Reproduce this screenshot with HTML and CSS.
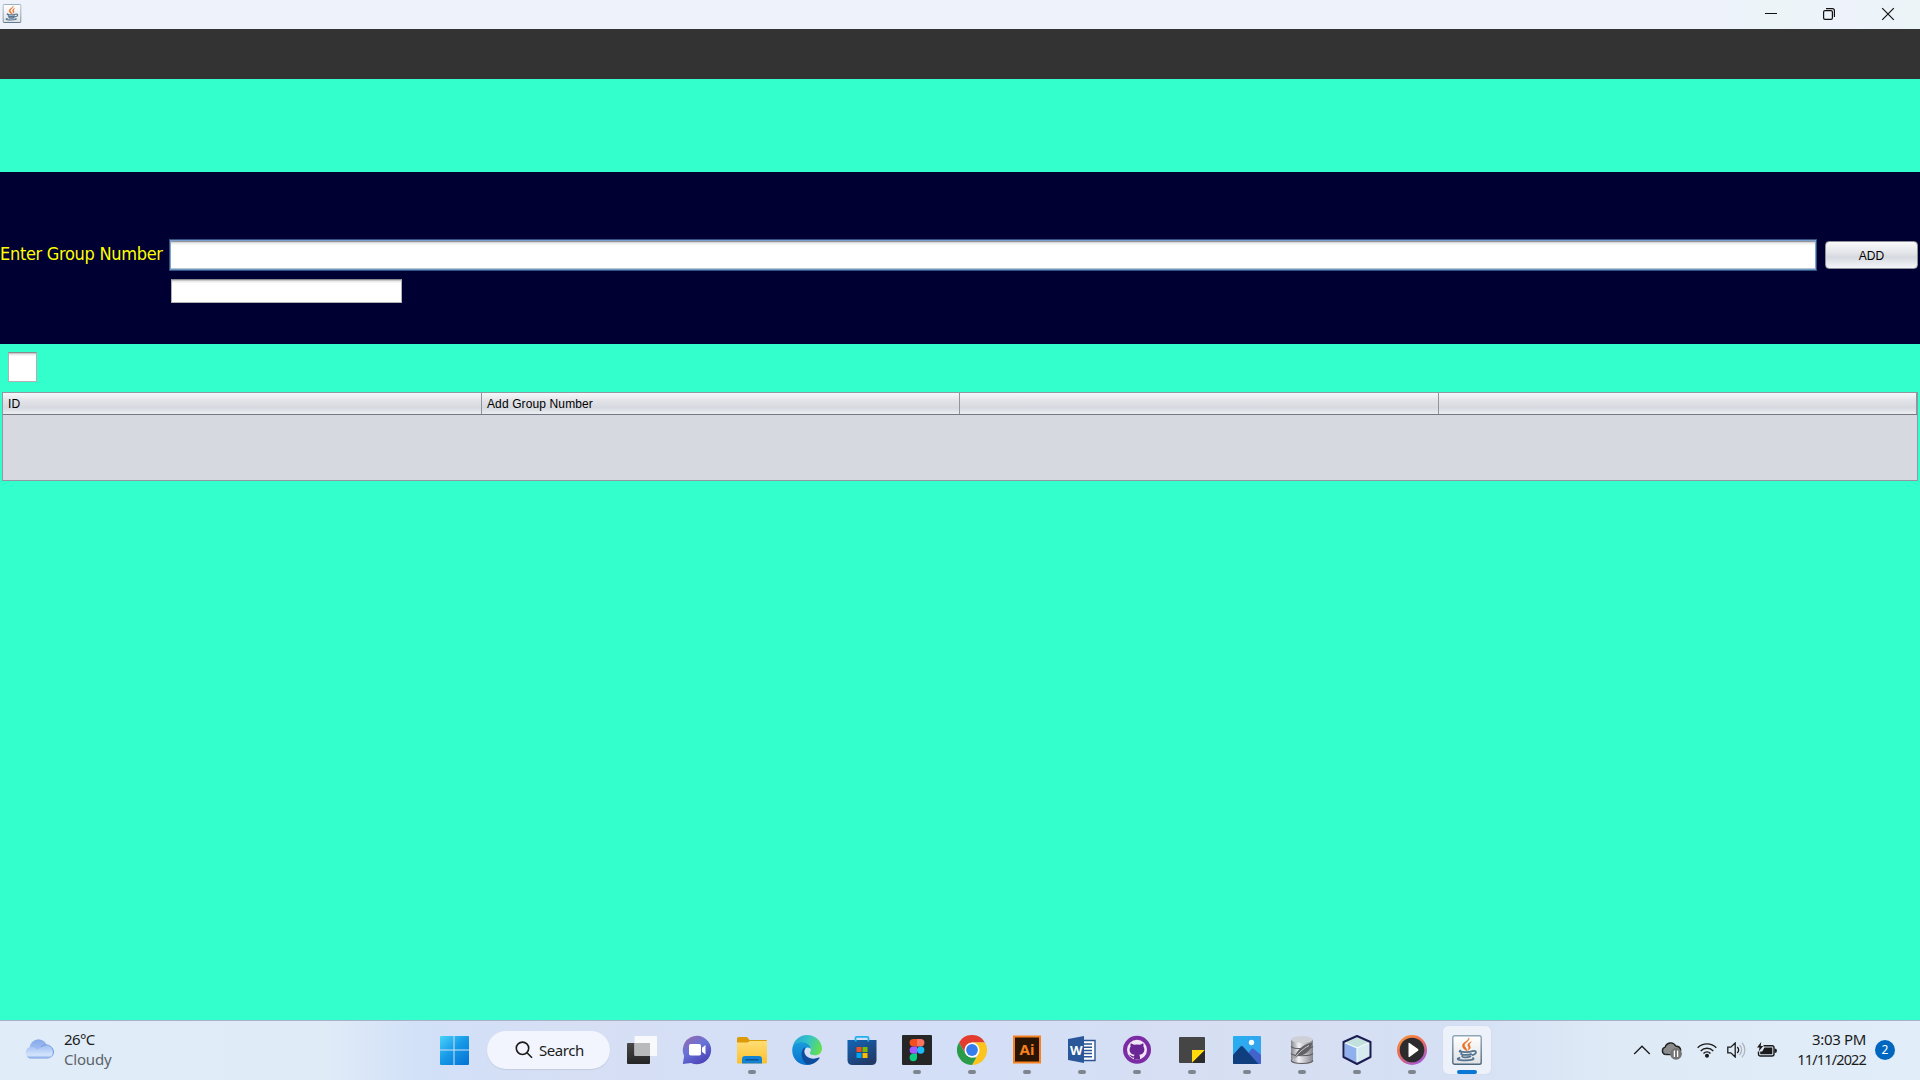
FILE: index.html
```
<!DOCTYPE html>
<html lang="en">
<head>
<meta charset="utf-8">
<title>Add Group Number</title>
<link rel="stylesheet" href="styles.css">
</head>
<body>
<svg width="0" height="0" class="defs">
  <defs>
    <linearGradient id="javaTile" x1="0" y1="0" x2="0" y2="1"><stop offset="0" stop-color="#fff"/><stop offset="1" stop-color="#dfe1e4"/></linearGradient>
    <linearGradient id="javaEdge" x1="0" y1="0" x2="0" y2="1"><stop offset="0" stop-color="#8ea6b8"/><stop offset="1" stop-color="#4b6880"/></linearGradient>
    <symbol id="java" viewBox="0 0 30 30">
      <rect x=".8" y=".8" width="28.4" height="28.4" rx="1.8" fill="url(#javaTile)" stroke="url(#javaEdge)" stroke-width="1.4"/>
      <path d="M16.800 2.800c1.600 3.400-5.400 5-4.200 8.200.5 1.400 2.200 2.600 2.600 5-2.800-1.400-5.400-3.400-4.600-6.200.6-2.600 6.200-3.800 6.200-7zM19.500 6.800c-2.800 1-4 2.200-3.600 3.800.3 1.200 1.600 2 .2 4.700 2.700-1.700 2.500-3.300 1.700-4.600-.7-1.200-.3-2.600 1.700-3.900z" fill="#ea7022" stroke="#ea7022" stroke-width=".5"/>
      <g fill="none" stroke="#557491" stroke-width="1.800" stroke-linecap="round">
        <path d="M8.500 15.600c-2 .9-1 1.500 5 1.500 3.200 0 5.500-.3 7-.9M9.200 18.300c-.5 1.500 2 1.600 4.500 1.600s4.200-.3 5.500-.8M10.200 21.200c-.4 1.400 5 1.600 8.200.3M21 16.200c3.800-1.200 4.200 2.600-.6 3.900M7.500 23c-3.500.8-2 2.300 6 2.300 6.500 0 9.500-1.100 7.500-2.300"/>
      </g>
    </symbol>
  </defs>
</svg>

<header class="titlebar">
  <svg class="app-icon" viewBox="0 0 30 30"><use href="#java"/></svg>
  <div class="controls">
    <svg viewBox="0 0 14 14"><path d="M1 6.500h12" stroke="#111" /></svg>
    <svg viewBox="0 0 14 14" fill="none" stroke="#111" stroke-width="1.200"><rect x="1.600" y="3.600" width="8.800" height="8.800" rx="1.400"/><path d="M4 1.600h6.400q2 0 2 2V10"/></svg>
    <svg viewBox="0 0 14 14"><path d="M1.200 1.200l11.600 11.600M12.800 1.200L1.200 12.800" stroke="#111" stroke-width="1.200"/></svg>
  </div>
</header>
<div class="band"></div>

<main class="content">
  <form class="entry">
    <label class="caption" for="group">Enter Group Number</label>
    <input class="field focused" id="group" type="text">
    <button class="add" type="button">ADD</button>
    <input class="field second" type="text">
  </form>
  <div class="field box"></div>
  <section class="table">
    <div class="head">
      <div>ID</div><div>Add Group Number</div><div></div><div></div>
    </div>
  </section>
</main>

<footer class="taskbar">
  <div class="weather">
    <svg width="30" height="20" viewBox="0 0 30 20">
      <defs><linearGradient id="cl" x1="0" y1="0" x2="0" y2="1"><stop offset="0" stop-color="#86a9ea"/><stop offset="1" stop-color="#b5cdf7"/></linearGradient>
      <linearGradient id="cl2" x1="0" y1="0" x2="0" y2="1"><stop offset="0" stop-color="#a2bff3"/><stop offset=".75" stop-color="#d5e4fb"/><stop offset="1" stop-color="#799ee5"/></linearGradient></defs>
      <circle cx="14.500" cy="9" r="8.700" fill="url(#cl)"/>
      <path d="M6 19.500a6 6 0 0 1 0-11.500c3-.5 5 .5 6.500 2.500L16 9.500C20 4.500 30 6.500 30 13a6.500 6.500 0 0 1-6.500 6.500z" fill="url(#cl2)"/>
      <path d="M17 8c3-4 12-2.500 12.500 5 0 2-1 3.500-2 4.500" fill="none" stroke="#7499e2" stroke-width="1"/>
    </svg>
    <div class="wtext"><span class="temp">26°C</span><span class="sky">Cloudy</span></div>
  </div>

  <nav class="apps">
    <div class="app">
      <svg viewBox="0 0 30 30"><defs><linearGradient id="win" gradientUnits="userSpaceOnUse" x1="1" y1="1" x2="26" y2="29"><stop offset="0" stop-color="#4ad2fb"/><stop offset=".5" stop-color="#179be8"/><stop offset="1" stop-color="#0677d6"/></linearGradient></defs>
      <path fill="url(#win)" d="M1 2q0-1 1-1h12.500v13.500H1zM15.500 1H29q1 0 1 1v12.500H15.500zM1 15.500h13.500V30H2q-1 0-1-1zM15.500 15.500H30V29q0 1-1 1H15.500z"/></svg>
    </div>
    <div class="search">
      <svg width="18" height="18" viewBox="0 0 18 18" fill="none" stroke="#1b1b1b" stroke-width="1.600"><circle cx="7.500" cy="7.300" r="6.200"/><path d="M12 11.800l5 5"/></svg>
      <span>Search</span>
    </div>
    <div class="app">
      <svg viewBox="0 0 30 30"><defs><linearGradient id="tv" x1="0" y1="0" x2="0" y2="1"><stop offset="0" stop-color="#484848"/><stop offset="1" stop-color="#252525"/></linearGradient></defs>
      <rect x="0" y="8" width="23" height="21" rx="1" fill="url(#tv)"/><rect x="7.500" y="1" width="22.500" height="20" rx="1" fill="#fafafa" opacity=".95"/><path d="M7.500 8H23v13H8.500q-1 0-1-1z" fill="#b9babb"/></svg>
    </div>
    <div class="app">
      <svg viewBox="0 0 30 30"><defs><linearGradient id="chat" x1="0" y1="0" x2=".6" y2="1"><stop offset="0" stop-color="#9b66a9"/><stop offset=".5" stop-color="#6874d8"/><stop offset="1" stop-color="#4d45b8"/></linearGradient></defs>
      <path d="M15 .8a14.200 14.200 0 1 1-6 27.100L.8 29l1.300-8A14.200 14.200 0 0 1 15 .8z" fill="url(#chat)"/><rect x="7" y="9" width="12" height="11.500" rx="1.700" fill="#fff"/><path d="M20 12.700l3.500-2.700v9.500L20 16.800z" fill="#fff"/></svg>
    </div>
    <div class="app run">
      <svg viewBox="0 0 30 30"><defs><linearGradient id="fo" x1="0" y1="0" x2="0" y2="1"><stop offset="0" stop-color="#ffdd74"/><stop offset="1" stop-color="#fcc02d"/></linearGradient></defs>
      <path d="M0 3.500Q0 2 1.500 2H10l2.500 3H29q1 0 1 1v3H0z" fill="#dc9a09"/><path d="M0 7.500h10.500L13 6h17v21.500q0 1-1 1H1q-1 0-1-1z" fill="url(#fo)"/>
      <path d="M5 28.500V24q0-3 3-3h14q3 0 3 3v4.500z" fill="#1583d4"/><path d="M9 24.800h12" stroke="#0b5392" stroke-width="1.400" stroke-linecap="round"/></svg>
    </div>
    <div class="app">
      <svg viewBox="0 0 30 30"><defs><linearGradient id="eg" x1="0" y1=".3" x2="1" y2=".6"><stop offset="0" stop-color="#23a4dd"/><stop offset=".5" stop-color="#36c5c3"/><stop offset="1" stop-color="#66e04c"/></linearGradient><linearGradient id="eb" x1="0" y1="0" x2="0" y2="1"><stop offset="0" stop-color="#1b9bdd"/><stop offset="1" stop-color="#0871cf"/></linearGradient></defs>
      <path d="M.4 13C1.500 5.500 7.500 0 15 0c9 0 15 6.500 15 13.500 0 4-3 6.800-7 6.800-3.500 0-5.500-1.200-5.200-2.500 2.500-2.800.5-7-4-7.800C8 9 3 10.500.4 13z" fill="url(#eg)"/>
      <path d="M.2 15C.5 9.500 5.500 7.300 9.500 7.300c5.500 0 9 3.200 9 6.500-3.300-3-7 0-6.500 4.200.5 6 7 9.500 12 8C21 29 17.500 30 15 30 7 30 0 24 .2 15z" fill="url(#eb)"/>
      <path d="M13.500 12C8 14.500 8 24.500 15 29.500c5.500.5 10-2.300 12.500-6.200.4-.8-.2-1-.8-.8-7 3.300-15.500-1-14.200-7.500z" fill="#104c9c"/></svg>
    </div>
    <div class="app">
      <svg viewBox="0 0 30 30"><defs><linearGradient id="st" x1="0" y1="0" x2=".6" y2="1"><stop offset="0" stop-color="#1265b6"/><stop offset="1" stop-color="#223a68"/></linearGradient></defs>
      <path d="M8.500 6.500V3q0-1.200 1.200-1.200h10.600q1.200 0 1.200 1.200v3.500" fill="none" stroke="#25b0ec" stroke-width="1.800"/><path d="M.5 5h29v20q0 5-5 5h-19q-5 0-5-5z" fill="url(#st)"/>
      <path d="M8.700 6.500V5M21.300 6.500V5" stroke="#25b0ec" stroke-width="1.800"/><path fill="#f25022" d="M9.500 12h5v5h-5z"/><path fill="#7fba00" d="M15.500 12h5v5h-5z"/><path fill="#00a4ef" d="M9.500 18h5v5h-5z"/><path fill="#ffb900" d="M15.500 18h5v5h-5z"/></svg>
    </div>
    <div class="app run">
      <svg viewBox="0 0 30 30"><rect width="30" height="30" rx="1" fill="#262626"/><path d="M15 4h-3.700a3.700 3.700 0 0 0 0 7.400H15z" fill="#f24e1e"/><path d="M15 4h3.700a3.700 3.700 0 0 1 0 7.400H15z" fill="#ff7262"/><path d="M15 11.400h-3.700a3.700 3.700 0 0 0 0 7.400H15z" fill="#a259ff"/><circle cx="18.700" cy="15.100" r="3.700" fill="#1abcfe"/><path d="M15 18.800h-3.700a3.700 3.700 0 1 0 3.700 3.700z" fill="#0acf83"/></svg>
    </div>
    <div class="app run">
      <svg viewBox="0 0 30 30"><path d="M2 7.500A15 15 0 0 1 28 7.500H15L8.500 18.800z" fill="#e33b2e"/><path d="M28 7.500A15 15 0 0 1 15 30L21.500 18.800 15 7.500z" fill="#fdc41c"/><path d="M15 30A15 15 0 0 1 2 7.500L8.500 18.800Q11 22.500 15 22.500h4.400z" fill="#2a9b49"/><circle cx="15" cy="15" r="7.500" fill="#fff"/><circle cx="15" cy="15" r="5.900" fill="#357ded"/></svg>
    </div>
    <div class="app run">
      <svg viewBox="0 0 30 30"><rect x="2" y="1.500" width="26" height="26" fill="#2a1503" stroke="#f5811f" stroke-width="2"/><text x="15" y="19.800" text-anchor="middle" class="ai">Ai</text></svg>
    </div>
    <div class="app run">
      <svg viewBox="0 0 30 30"><path d="M15 5.500h13v20H15z" fill="#fff" stroke="#295596" stroke-width="1.400"/><path d="M16 9h9M16 12.200h9M16 15.400h9M16 18.600h9M16 21.800h9" stroke="#295596" stroke-width="1.500"/><path d="M1 4l16-3v27L1 25z" fill="#2a579a"/><text x="9.200" y="19.700" text-anchor="middle" class="word">W</text></svg>
    </div>
    <div class="app run">
      <svg viewBox="0 0 30 30"><circle cx="15" cy="14.800" r="14" fill="#7b2ba3"/><circle cx="15" cy="14.800" r="10" fill="#f0e6f6"/><path d="M8.800 8.200l3.200 1.600q3-.8 6 0l3.200-1.600q.6 1.800.2 3.200c2.400 3.800.2 8-4.200 8.400.8.800.8 1.600.8 4.800h-6v-2c-3 .6-3.200-1.700-5-2.800 2.400-.4 2.500 2.200 5 1.400q.1-1 .7-1.400c-4.400-.4-6.500-4.600-4.100-8.400q-.4-1.400.2-3.200z" fill="#6a2694"/></svg>
    </div>
    <div class="app run">
      <svg viewBox="0 0 30 30"><rect x="2" y="2" width="26" height="26" rx="1" fill="#454545"/><path d="M15 15h13L15 28z" fill="#ffdb0e"/><path d="M28 15v12q0 1-1 1H15z" fill="#2b2b2b"/></svg>
    </div>
    <div class="app run">
      <svg viewBox="0 0 30 30"><defs><linearGradient id="ph" x1="0" y1="0" x2="1" y2="1"><stop offset="0" stop-color="#27aef0"/><stop offset="1" stop-color="#3aa0ee"/></linearGradient></defs><rect x="1" y="1" width="28" height="28" rx="1" fill="url(#ph)"/><path d="M14 21l5.500-7q1.200-1 2.400 0L29 20v8q0 1-1 1H14z" fill="#4263cc"/><path d="M1 20l7.500-8.500q1.200-1 2.400 0L26.500 29H2q-1 0-1-1z" fill="#103f7f"/><circle cx="19.500" cy="7.500" r="2.700" fill="#f5fbff"/></svg>
    </div>
    <div class="app run">
      <svg viewBox="0 0 30 30"><defs><linearGradient id="db" x1="0" y1="0" x2="1" y2="0"><stop offset="0" stop-color="#85858b"/><stop offset=".35" stop-color="#f1f1f6"/><stop offset="1" stop-color="#85858c"/></linearGradient></defs>
      <path d="M4 4.500v21c0 4.500 22 4.500 22 0v-21z" fill="url(#db)"/><ellipse cx="15" cy="4.500" rx="11" ry="3.500" fill="#cfcfd7"/><path d="M4 11.500c2 3 20 3 22 0M4 18.500c2 3 20 3 22 0M4 25.500c2 4 20 4 22 0" fill="none" stroke="#5c5c60" stroke-width="1.200"/><path d="M7 24C9 16 15 9.500 25 7.500 25 14 20 20 11 21z" fill="#626266"/><path d="M5.500 26C11 18 15 14.500 22 10.500" stroke="#c9c9ce" fill="none"/></svg>
    </div>
    <div class="app run">
      <svg viewBox="0 0 30 30"><path d="M15 2.500L27 7.500 15 13 3 7.500z" fill="#c3e1dc"/><path d="M15 13l12.300-5.300v13.800L15 27.800z" fill="#d5ebef"/><path d="M15 13L2.700 7.700v13.800L15 27.800z" fill="#8fb0ec"/><path d="M3 7.700L15 13v14M15 13l12-5.300" stroke="#eefafa" stroke-width="1.200" fill="none"/><path d="M15 1l13.500 6v15L15 29 1.500 22V7z" fill="none" stroke="#1c1c52" stroke-width="2" stroke-linejoin="round"/></svg>
    </div>
    <div class="app run">
      <svg viewBox="0 0 30 30"><defs><linearGradient id="mp" x1="0" y1="0" x2=".6" y2="1"><stop offset="0" stop-color="#fb9c33"/><stop offset=".5" stop-color="#ee6a55"/><stop offset="1" stop-color="#a95ad0"/></linearGradient></defs><circle cx="15" cy="15" r="15" fill="url(#mp)"/><circle cx="15" cy="15" r="12.300" fill="#2c2c2e"/><path d="M11.500 8.500q0-1 1-.5L21 14q1 .9 0 1.800L12.500 22q-1 .4-1-.6z" fill="#fff"/></svg>
    </div>
    <div class="app run active">
      <svg viewBox="0 0 30 30"><use href="#java"/></svg>
    </div>
  </nav>

  <div class="tray">
    <svg class="chev" width="18" height="10" viewBox="0 0 18 10"><path d="M1.200 9L9 1.200 16.800 9" fill="none" stroke="#1b1b1b" stroke-width="1.300"/></svg>
    <svg class="cloud" width="21" height="19" viewBox="0 0 21 19"><path d="M4.500 13.500a3.800 3.800 0 0 1-.3-7.400C5.500 1.500 12 0 14.700 5c3 .2 5 2 5 5" fill="#8b8b8b" stroke="#1f1f1f" stroke-width="1.400"/><path d="M4.500 13.500H10" stroke="#1f1f1f" stroke-width="1.400"/><circle cx="15" cy="12.800" r="5.900" fill="#747474"/><path d="M13.400 9.500v6.500M16.600 9.500v6.500" stroke="#fff" stroke-width="1.300"/></svg>
    <svg class="wifi" width="20" height="16" viewBox="0 0 20 16" fill="none" stroke="#1b1b1b" stroke-width="1.400"><path d="M.7 5.800a13 13 0 0 1 18.600 0M3.700 8.900a8.900 8.900 0 0 1 12.600 0M6.500 11.500a5 5 0 0 1 7 0"/><circle cx="10" cy="13.700" r="1.300" fill="#1b1b1b"/></svg>
    <svg class="vol" width="20" height="16" viewBox="0 0 20 16" fill="none" stroke="#1b1b1b" stroke-width="1.300"><path d="M.8 5.200h3L8.200 1v14l-4.400-4.200h-3zM10.300 5a4.500 4.500 0 0 1 0 6"/><path d="M12.500 3a7 7 0 0 1 0 10M15 .8a10.500 10.500 0 0 1 0 14.400" stroke="#aeb5bd"/></svg>
    <svg class="batt" width="20" height="16" viewBox="0 0 20 16"><path d="M6.500 3.700H15q2 0 2 2V12q0 2-2 2H3.500q-2 0-2-2V9.500" fill="none" stroke="#1b1b1b" stroke-width="1.400"/><path d="M7.500 5.500h7.800v6.800H3.200V9.500h2z" fill="#1b1b1b"/><path d="M17.500 6.500q2.500 0 2.500 2.300t-2.500 2.300z" fill="#1b1b1b"/><path d="M4.200 0L0 5.500h2.500L1.800 9.500 6.200 4H3.700z" fill="#1b1b1b"/></svg>
    <div class="clock"><span class="time">3:03 PM</span><span class="date">11/11/2022</span></div>
    <div class="badge">2</div>
  </div>
</footer>
</body>
</html>
```
FILE: styles.css
```
* { box-sizing: border-box; }
body {
  margin: 0;
  width: 1920px;
  height: 1080px;
  overflow: hidden;
  display: flex;
  flex-direction: column;
  background: #33ffcc;
  font-family: "Liberation Sans", sans-serif;
}
.defs { position: absolute; }
svg { display: block; flex: none; }

.titlebar {
  height: 29px;
  flex: none;
  display: flex;
  align-items: flex-start;
  justify-content: space-between;
  background: linear-gradient(90deg, #eef3fb 0 90%, #ebf4f7 92%, #eef3fb 96%, #ebf4f7);
  padding: 4px 25px 0 2px;
}
.app-icon { width: 20px; height: 19px; }
.controls { display: flex; gap: 44px; padding-top: 3px; }
.controls svg { width: 14px; height: 14px; }
.controls svg:last-child { margin-left: 1px; }

.band { height: 50px; flex: none; background: #333; }

.content {
  flex: 1;
  padding-top: 93px;
  display: flex;
  flex-direction: column;
}
.entry {
  flex: none;
  height: 172px;
  background: #000033;
  padding: 67px 2px 0 0;
  display: grid;
  grid-template-columns: 169px 1648px 93px;
  grid-template-rows: 32px 24px;
  row-gap: 8px;
  justify-content: start;
}
.caption {
  color: #ffff00;
  font: 18px/30px "DejaVu Sans Condensed", "DejaVu Sans", sans-serif;
  font-stretch: condensed;
  white-space: nowrap;
  letter-spacing: -0.3px;
}
.field {
  margin: 0;
  padding: 0;
  border: 1px solid #b0b0b5;
  border-top-color: #8b8b90;
  background: linear-gradient(#c8c8ca 0 1px, #eaeaeb 1px 2px, #fff 3px);
  outline: none;
}
.focused {
  margin: 1px;
  border-color: #7ba0d2 #7ba6d3 #6a9bc8 #7ba6d3;
  background: linear-gradient(#949496 0 1px, #dadadc 1px 2px, #eee 2px 3px, #fff 4px);
  box-shadow: 0 0 0 1px #34507f, inset 0 -1px #bcc4cc;
}
.add {
  margin: 2px 0 2px 8px;
  width: 93px;
  height: 28px;
  padding: 1px 0 0;
  border: 1px solid #8d9097;
  border-radius: 4px;
  background: linear-gradient(#fafafb, #e4e6ea 40%, #d6d9df 58%, #f4f6fb);
  font: 12px "Liberation Sans", sans-serif;
  color: #000;
}
.second { grid-column: 2; width: 231px; margin-left: 2px; }
.box { flex: none; width: 29px; height: 30px; margin: 8px 0 10px 8px; }

.table {
  flex: none;
  height: 89px;
  margin: 0 2px;
  background: #d6d9e0;
  border: 1px solid #9297a1;
}
.head {
  height: 22px;
  display: grid;
  grid-template-columns: 479px 478px 479px 1fr;
  grid-template-rows: 21px;
  border-bottom: 1px solid #737882;
  background: linear-gradient(#f7f8fa, #e2e4e9 35%, #d6d9df 70%, #eceef3);
  font-size: 12px;
  line-height: 23px;
  letter-spacing: 0.12px;
}
.head div { padding-left: 5px; border-right: 1px solid #8f949d; white-space: nowrap; }

.taskbar {
  flex: none;
  height: 60px;
  border-top: 1px solid #a9b1c9;
  display: flex;
  font-family: "Noto Sans", "Open Sans", sans-serif;
  font-size: 15px;
  color: #1b1b1b;
  background: linear-gradient(90deg, #e0ecf7 0, #dfebf7 17%, #d2e0f8 22%, #d6dff4 30%, #d3dff7 50%, #d7dff2 65%, #d5e0f4 76%, #deeaf6 84%, #e1edf8 100%);
}
.weather { width: 426px; flex: none; display: flex; padding: 8px 0 0 25px; gap: 9px; }
.weather svg { margin: 10px 1px 0 -1px; }
.wtext, .clock { display: flex; flex-direction: column; line-height: 20px; }
.temp { letter-spacing: -0.6px; }
.sky { color: #5c636b; letter-spacing: -0.2px; }

.apps { display: flex; flex: none; }
.app {
  position: relative;
  width: 55px;
  height: 59px;
  padding: 14px 12px 0 13px;
}
.app svg { width: 30px; height: 30px; position: relative; }
.run::after {
  content: "";
  position: absolute;
  left: 24px;
  top: 49px;
  width: 8px;
  height: 4px;
  border-radius: 2px;
  background: #7f858f;
}
.active::before {
  content: "";
  position: absolute;
  left: 4px;
  top: 5px;
  width: 48px;
  height: 48px;
  border-radius: 5px;
  background: #edf1fa;
  box-shadow: 0 0 1px #b9c3d6;
}
.active::after { left: 18px; width: 20px; background: #0878d4; }
.ai { font: bold 15px "Noto Sans", sans-serif; fill: #f5811f; }
.word { font: bold 13px "Open Sans", sans-serif; fill: #fff; }
.search {
  width: 123px;
  height: 38px;
  margin: 10px 4px 0 6px;
  border-radius: 19px;
  background: #f2f5fd;
  box-shadow: 0 1px 1px #c3cce0;
  display: flex;
  align-items: center;
  padding-left: 28px;
  gap: 6px;
  letter-spacing: -0.45px;
}

.tray { flex: 1; display: flex; padding-left: 139px; }
.chev { margin: 24px 10px 0 0; }
.cloud { margin: 20px 15px 0 0; }
.wifi { margin: 21px 10px 0 0; }
.vol { margin: 21px 10px 0 0; }
.batt { margin: 21px 0 0; }
.clock { width: 88px; align-items: flex-end; padding-top: 8px; flex: none; }
.time { letter-spacing: -0.35px; margin-right: -1px; }
.date { font-size: 14.5px; letter-spacing: -0.85px; margin-right: -1px; }
.badge {
  margin: 19px 0 0 10px;
  width: 20px;
  height: 20px;
  flex: none;
  border-radius: 50%;
  background: #0067c0;
  color: #fff;
  font-size: 12px;
  line-height: 20px;
  text-align: center;
}
```
